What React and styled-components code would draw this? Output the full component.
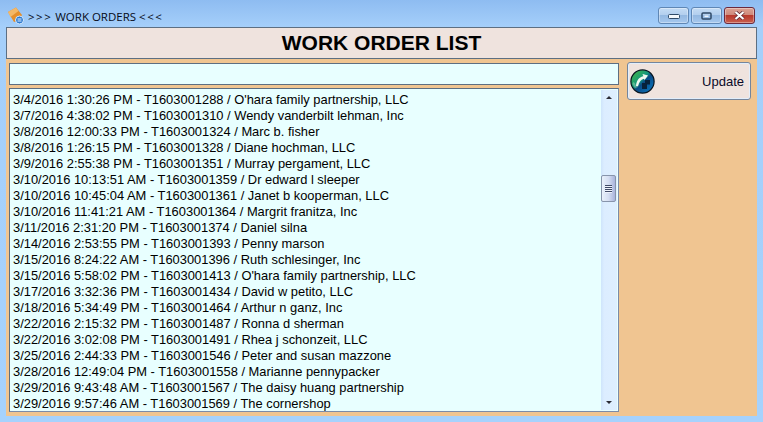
import React from "react";
import styled, { createGlobalStyle } from "styled-components";

const GlobalStyle = createGlobalStyle`
  html, body {
    margin: 0;
    padding: 0;
  }
  body {
    font-family: "Liberation Sans", Arial, sans-serif;
  }
`;

const orders = [
  "3/4/2016 1:30:26 PM - T1603001288 / O'hara family partnership, LLC",
  "3/7/2016 4:38:02 PM - T1603001310 / Wendy vanderbilt lehman, Inc",
  "3/8/2016 12:00:33 PM - T1603001324 / Marc b. fisher",
  "3/8/2016 1:26:15 PM - T1603001328 / Diane hochman, LLC",
  "3/9/2016 2:55:38 PM - T1603001351 / Murray pergament, LLC",
  "3/10/2016 10:13:51 AM - T1603001359 / Dr edward l sleeper",
  "3/10/2016 10:45:04 AM - T1603001361 / Janet b kooperman, LLC",
  "3/10/2016 11:41:21 AM - T1603001364 / Margrit franitza, Inc",
  "3/11/2016 2:31:20 PM - T1603001374 / Daniel silna",
  "3/14/2016 2:53:55 PM - T1603001393 / Penny marson",
  "3/15/2016 8:24:22 AM - T1603001396 / Ruth schlesinger, Inc",
  "3/15/2016 5:58:02 PM - T1603001413 / O'hara family partnership, LLC",
  "3/17/2016 3:32:36 PM - T1603001434 / David w petito, LLC",
  "3/18/2016 5:34:49 PM - T1603001464 / Arthur n ganz, Inc",
  "3/22/2016 2:15:32 PM - T1603001487 / Ronna d sherman",
  "3/22/2016 3:02:08 PM - T1603001491 / Rhea j schonzeit, LLC",
  "3/25/2016 2:44:33 PM - T1603001546 / Peter and susan mazzone",
  "3/28/2016 12:49:04 PM - T1603001558 / Marianne pennypacker",
  "3/29/2016 9:43:48 AM - T1603001567 / The daisy huang partnership",
  "3/29/2016 9:57:46 AM - T1603001569 / The cornershop",
];

const Window = styled.div`
  width: 763px;
  height: 422px;
  box-sizing: border-box;
  padding: 0 6px 6px;
  display: flex;
  flex-direction: column;
  overflow: hidden;
  background: linear-gradient(180deg, #8ebcf1 0, #a5cffa 27px, #a6d2fd 100%);
`;

const TitleBar = styled.div`
  height: 27px;
  flex: none;
  display: flex;
  justify-content: space-between;
`;

const TitleLeft = styled.div`
  display: flex;
  align-items: center;
  gap: 3px;
  padding: 5px 0 0 1px;
  font-family: "Open Sans", sans-serif;
  font-size: 11.5px;
  color: #050a18;
`;

const Chevrons = styled.span`
  letter-spacing: 1.5px;
`;

const WindowButtons = styled.div`
  display: flex;
  gap: 2px;
  align-self: flex-start;
  padding: 7px 2px 0 0;
`;

const WindowButton = styled.div`
  width: 31px;
  height: 17px;
  box-sizing: border-box;
  display: flex;
  align-items: center;
  justify-content: center;
  border: 1px solid ${({ $close }) => ($close ? "#6b2a3e" : "#5f87b5")};
  border-radius: 3px;
  box-shadow: inset 0 0 0 1px rgba(255, 255, 255, 0.35);
  background: ${({ $close }) =>
    $close
      ? "linear-gradient(180deg, #dba294 0%, #cf8a7c 45%, #b8392c 50%, #c9604f 100%)"
      : "linear-gradient(180deg, #c4dcf5 0%, #b3cfee 45%, #94b9e2 50%, #a6c8ee 100%)"};
`;

const Client = styled.div`
  flex: 1;
  min-height: 0;
  display: flex;
  flex-direction: column;
  background: #f0c591;
`;

const Header = styled.h1`
  margin: 0;
  height: 32px;
  box-sizing: border-box;
  flex: none;
  display: flex;
  align-items: center;
  justify-content: center;
  background: #efe3de;
  border: 1px solid #5d6f82;
  font-size: 21px;
  font-weight: 700;
  color: #000;
`;

const Body = styled.div`
  flex: 1;
  min-height: 0;
  display: flex;
  gap: 8px;
  padding: 4px 6px 4px 3px;
`;

const LeftColumn = styled.div`
  width: 610px;
  display: flex;
  flex-direction: column;
  gap: 3px;
`;

const SearchInput = styled.input`
  flex: none;
  height: 22px;
  box-sizing: border-box;
  margin: 0;
  padding: 0 3px;
  outline: none;
  background: #e8ffff;
  border: 1px solid #5d6f82;
`;

const ListBox = styled.div`
  flex: 1;
  min-height: 0;
  display: flex;
  overflow: hidden;
  background: #e8ffff;
  border: 1px solid #7b8ba8;
  border-top-color: #5d6f82;
  border-left-color: #5d6f82;
`;

const Rows = styled.ul`
  flex: 1;
  margin: 0;
  padding: 3px 0 0 3px;
  list-style: none;
  overflow: hidden;
`;

const Row = styled.li`
  height: 16px;
  line-height: 16px;
  font-size: 12.9px;
  white-space: nowrap;
  color: #000;
`;

const ScrollBar = styled.div`
  position: relative;
  flex: none;
  width: 16px;
  margin: 1px 1px 1px 0;
  background: linear-gradient(90deg, #cfe5fb 0%, #dcedff 20%, #deefff 100%);
`;

const Arrow = styled.div`
  position: absolute;
  left: 5px;
  ${({ $down }) => ($down ? "bottom: 6px;" : "top: 6px;")}
  width: 0;
  height: 0;
  border-left: 3px solid transparent;
  border-right: 3px solid transparent;
  ${({ $down }) =>
    $down ? "border-top: 3px solid #2b2b35;" : "border-bottom: 3px solid #2b2b35;"}
`;

const Thumb = styled.div`
  position: absolute;
  top: 85px;
  left: 0;
  width: 15px;
  height: 27px;
  box-sizing: border-box;
  display: flex;
  flex-direction: column;
  align-items: center;
  justify-content: center;
  gap: 1px;
  border: 1px solid #8794ab;
  border-radius: 2px;
  background: linear-gradient(90deg, #e9f1fb 0%, #d5def2 50%, #a9b4dc 100%);
`;

const Grip = styled.span`
  width: 7px;
  height: 1px;
  background: #3f4a66;
  box-shadow: 0 1px 0 #eef2fb;
`;

const UpdateButton = styled.button`
  width: 124px;
  height: 38px;
  box-sizing: border-box;
  margin: -1px 0 0;
  padding: 0 6px 0 2px;
  display: flex;
  align-items: center;
  justify-content: space-between;
  font-family: inherit;
  font-size: 13px;
  color: #0a0a28;
  background: #efe3de;
  border: 1px solid #74859c;
  border-radius: 3px;
  box-shadow: inset 0 0 0 1px #e2eefb;
`;

const AppIcon = () => (
  <svg width="18" height="18" viewBox="0 0 18 18">
    <path d="M1 5 L9 0.5 L15 8 L12 14 L7 15 Z" fill="#e58f2c" />
    <path d="M1 5 L9 0.5 L11.5 4 L3.5 10 Z" fill="#f3b868" />
    <circle cx="12.5" cy="13" r="4" fill="#2a78d0" stroke="#d8eafa" />
    <path d="M10.5 12 H14.5 M10.5 14 H14.5" stroke="#eaf4ff" strokeWidth="1" />
  </svg>
);

const UpdateIcon = () => (
  <svg width="25" height="25" viewBox="0 0 25 25">
    <defs>
      <linearGradient id="globe" x1="0.1" y1="0.1" x2="0.9" y2="0.9">
        <stop offset="0" stopColor="#3fb54a" />
        <stop offset="0.42" stopColor="#14957f" />
        <stop offset="0.55" stopColor="#0a4a86" />
        <stop offset="1" stopColor="#0b74bb" />
      </linearGradient>
    </defs>
    <circle cx="12.5" cy="12.5" r="11.6" fill="url(#globe)" stroke="#08141f" strokeWidth="1.2" />
    <path d="M2.5 15 C3 12 5 13 6 17 C7 11 10 8.5 13.5 8 L12.5 5.5 L18 6.5 L14.5 11 L14 9.8 C11 10.5 9 13 8 18 L5 19 Z" fill="#d9f0c8" opacity="0.35" />
    <path d="M6 17 C6.5 11 9.5 7.8 13.5 7.2 L12.5 5 L18 6.5 L14.5 11 L14 9.8 C11 10.5 9 13 8 17 Z" fill="#f2f8f0" />
    <path d="M12 19 V14 H15 V11 H20 V15.5 H17 V20 H12 Z" fill="#07213b" />
  </svg>
);

const App = () => {
  return (
    <Window>
      <GlobalStyle />
      <TitleBar>
        <TitleLeft>
          <AppIcon />
          <Chevrons>&gt;&gt;&gt;</Chevrons>
          <span>WORK ORDERS</span>
          <Chevrons>&lt;&lt;&lt;</Chevrons>
        </TitleLeft>
        <WindowButtons>
          <WindowButton>
            <svg width="12" height="6" viewBox="0 0 12 6">
              <rect x="0.5" y="1.5" width="11" height="4" rx="1" fill="#f4f8fc" stroke="#2f4a68" />
            </svg>
          </WindowButton>
          <WindowButton>
            <svg width="11" height="8" viewBox="0 0 11 8">
              <rect x="1" y="1" width="9" height="6" rx="1" fill="none" stroke="#2f4a68" strokeWidth="1.5" />
              <rect x="3.5" y="3.5" width="4" height="1.5" fill="#eef5fc" />
            </svg>
          </WindowButton>
          <WindowButton $close>
            <svg width="13" height="9" viewBox="0 0 13 9">
              <path d="M2.5 1 L10.5 8 M10.5 1 L2.5 8" stroke="#5a2630" strokeWidth="3.6" />
              <path d="M2.5 1 L10.5 8 M10.5 1 L2.5 8" stroke="#fff" strokeWidth="2.2" />
            </svg>
          </WindowButton>
        </WindowButtons>
      </TitleBar>
      <Client>
        <Header>WORK ORDER LIST</Header>
        <Body>
          <LeftColumn>
            <SearchInput />
            <ListBox>
              <Rows>
                {orders.map((order) => (
                  <Row key={order}>{order}</Row>
                ))}
              </Rows>
              <ScrollBar>
                <Arrow />
                <Thumb>
                  <Grip />
                  <Grip />
                  <Grip />
                  <Grip />
                </Thumb>
                <Arrow $down />
              </ScrollBar>
            </ListBox>
          </LeftColumn>
          <UpdateButton>
            <UpdateIcon />
            <span>Update</span>
          </UpdateButton>
        </Body>
      </Client>
    </Window>
  );
};

export default App;
